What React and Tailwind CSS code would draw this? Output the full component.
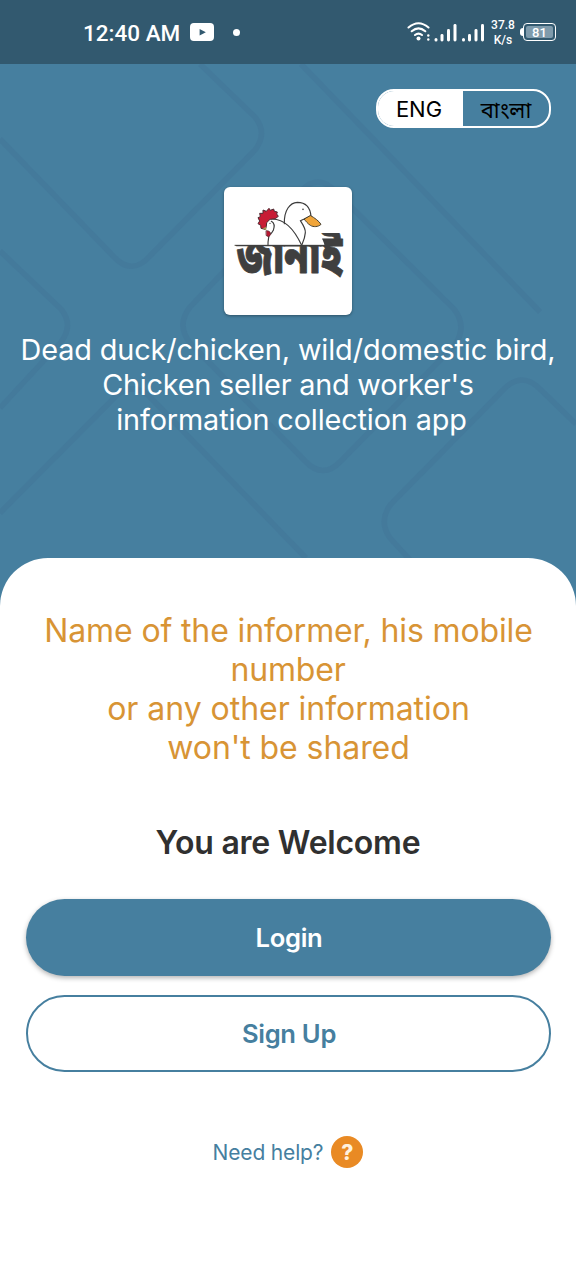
function BackgroundLines() {
  return (
    <svg
      className="absolute left-0 top-0"
      width="576"
      height="560"
      viewBox="0 64 576 560"
      fill="none"
      stroke="#43779a"
      strokeWidth="5.500"
      strokeOpacity="0.600"
      aria-hidden="true"
    >
      <path d="M200 64 L255 117 Q268 133 255 150 L150 256 Q132 276 114 257 L0 139" />
      <path d="M301 64 L540 312" />
      <path d="M0 251 L61 309 Q74 325 61 342 L0 408" />
      <path d="M300 192 Q318 172 336 192 L454 309 Q468 327 454 346 L341 461 Q323 480 305 461 L190 343 Q176 325 190 307 Z" />
      <path d="M0 513 L115 397 Q134 380 152 399 L306 558" />
      <path d="M412 562 L390 538 Q378 521 391 504 L503 390 Q522 370 541 390 L576 424" />
    </svg>
  );
}

function StatusBar() {
  return (
    <header className="flex h-16 shrink-0 items-center bg-[#32596f] pl-[83px] pr-5 text-white">
      <span className="w-[98px] whitespace-nowrap pt-[2px] font-[Roboto] text-[22.500px] font-medium leading-none">12:40 AM</span>
      <svg className="ml-[9px]" width="24" height="18" viewBox="0 0 25 18" preserveAspectRatio="none" aria-hidden="true">
        <rect width="25" height="18" rx="4" fill="#fff" />
        <path d="M10 6v6.500l6.500-3.200z" fill="#32596f" />
      </svg>
      <span className="ml-[19px] size-[7px] rounded-full bg-white" />
      <div className="ml-auto flex items-center">
        <svg width="78" height="24" viewBox="407 20 78 24" fill="none" aria-hidden="true">
          <g stroke="#fff" strokeWidth="2.100" strokeLinecap="round">
            <path d="M408.500 27.500q10-8.500 20 0" />
            <path d="M411.700 31.200q6.800-5.800 13.600 0" />
            <path d="M415 35q3.500-2.800 7 0" />
          </g>
          <circle cx="418.500" cy="38.500" r="2" fill="#fff" />
          <circle cx="428.300" cy="35.500" r="1.200" fill="#fff" />
          <circle cx="428.300" cy="39.500" r="1.200" fill="#fff" />
          <g fill="#fff">
            <rect x="434.500" y="38" width="3" height="3.500" rx="1.500" />
            <rect x="440.500" y="34" width="3" height="7.500" rx="1.400" />
            <rect x="447" y="29" width="3" height="12.500" rx="1.400" />
            <rect x="453.500" y="24" width="3" height="17.500" rx="1.400" />
            <rect x="462" y="38" width="3" height="3.500" rx="1.500" />
            <rect x="468" y="34" width="3" height="7.500" rx="1.400" />
            <rect x="474.500" y="29" width="3" height="12.500" rx="1.400" />
            <rect x="481" y="24" width="3" height="17.500" rx="1.400" />
          </g>
        </svg>
        <div className="ml-[6px] w-6 pt-px text-center font-[Roboto] text-[12px] font-medium leading-[15px]">
          <div>37.8</div>
          <div>K/s</div>
        </div>
        <div className="ml-[5px] flex items-center">
          <span className="h-2 w-[3px] rounded-l-sm bg-white" />
          <span className="flex h-[18px] w-[33px] rounded-[4px] border-[1.500px] border-white p-[2px]">
            <span className="flex w-full items-center justify-center rounded-[2px] bg-[#7f9bac] font-[Roboto] text-[13px] font-medium leading-none">81</span>
          </span>
        </div>
      </div>
    </header>
  );
}

function LanguageToggle() {
  return (
    <div className="flex h-[39px] w-[175px] overflow-hidden rounded-[18px] border-2 border-white text-[22px] text-black">
      <button className="flex w-[85px] items-center justify-center bg-white pr-[3px] pt-[2px]">ENG</button>
      <button className="flex flex-1 items-center justify-center pt-[7px] font-['Noto_Sans_Bengali','Noto_Sans',sans-serif]">বাংলা</button>
    </div>
  );
}

function Logo() {
  return (
    <div className="size-32 overflow-hidden rounded-md bg-white shadow-[0_1px_3px_rgba(0,0,0,0.35)]">
      <svg width="128" height="128" viewBox="30 27 384 384" fill="none" strokeLinecap="round" strokeLinejoin="round" role="img" aria-label="জানাই">
        <clipPath id="wordmark">
          <path d="M60 201H332L318 165H400V300H60Z" />
        </clipPath>
        <path d="M63 202H383" stroke="#444" strokeWidth="3" />
        <path d="M211 137C210 96 228 74 250 73C278 73 289 91 291 115L271 123L259 128C266 139 275 151 274 164C273 181 267 193 263 202" stroke="#3c3c3c" strokeWidth="3.500" />
        <path d="M162 202C161 191 164 181 165 172M172 130C181 135 182 146 178 157Q173 166 170 168M172 123C216 121 243 159 263 202" stroke="#3c3c3c" strokeWidth="3.500" />
        <path d="M290 113C301 119 315 129 321 139C313 147 298 148 289 142C281 137 276 130 271 124Z" fill="#f0a53a" stroke="#49412f" strokeWidth="3" />
        <path d="M153 154L141 151L140 142L132 137L137 129L132 119L139 116L137 106L147 106L147 96L157 100L165 91L169 97L179 93L181 100L190 102L188 108L193 115L184 122L168 124L158 134L157 145Z" fill="#c81c35" stroke="#4e2a32" strokeWidth="3" />
        <path d="M157 158Q170 157 170 170Q165 180 157 173Z" fill="#b71932" stroke="#4e2a32" strokeWidth="2" />
        <path d="M146 151L156 147L157 157Z" fill="#a59a54" />
        <circle cx="267" cy="94" r="2.500" fill="#3c3c3c" />
        <circle cx="168" cy="136" r="2" fill="#3c3c3c" />
        <g clipPath="url(#wordmark)">
          <text transform="matrix(1 0 0 1.300 0 -76)" x="68" y="277" fill="#3f3f3f" stroke="#3f3f3f" strokeWidth="2" fontSize="124" fontWeight="900" textLength="318" lengthAdjust="spacingAndGlyphs" fontFamily="'Noto Sans Bengali', 'Noto Sans', sans-serif">জানাই</text>
        </g>
      </svg>
    </div>
  );
}

export default function App() {
  return (
    <div className="flex h-[1280px] w-[576px] flex-col overflow-hidden bg-[#467f9f] font-[Inter,sans-serif]">
      <StatusBar />
      <main className="relative flex flex-1 flex-col">
        <BackgroundLines />
        <section className="relative flex h-[494px] shrink-0 flex-col items-center">
          <div className="mt-[25px] mr-[25px] self-end">
            <LanguageToggle />
          </div>
          <div className="mt-[59px]">
            <Logo />
          </div>
          <h1 className="mt-[17px] whitespace-nowrap text-center text-[28.800px] font-normal leading-[35.200px] text-white">
            <span className="block tracking-[-0.100px]">Dead duck/chicken, wild/domestic bird,</span>
            <span className="block tracking-[-0.210px]">Chicken seller and worker's</span>
            <span className="block pl-[7px] tracking-[-0.120px]">information collection app</span>
          </h1>
        </section>
        <section className="relative flex flex-1 flex-col items-center rounded-t-[48px] bg-white px-[25.500px]">
          <p className="mt-[53px] whitespace-nowrap text-center text-[32px] leading-[39px] text-[#d89435]">
            <span className="block pl-px tracking-[-0.130px]">Name of the informer, his mobile</span>
            <span className="block tracking-[-0.200px]">number</span>
            <span className="block pl-px tracking-[-0.040px]">or any other information</span>
            <span className="block pl-px tracking-[-0.080px]">won't be shared</span>
          </p>
          <h2 className="mt-[56px] text-[32px] font-semibold leading-[39px] tracking-[-0.240px] text-[#303030]">You are Welcome</h2>
          <button className="mt-[37px] h-[77px] w-full shrink-0 rounded-full bg-[#467f9f] pl-[2px] pt-[2px] text-[25.600px] font-semibold tracking-[-0.300px] text-white shadow-[0_2px_5px_rgba(0,0,0,0.3)]">Login</button>
          <button className="mt-[19px] h-[77px] w-full shrink-0 rounded-full border-2 border-[#467f9f] pl-[2px] pt-[2px] text-[25.600px] font-semibold tracking-[-0.300px] text-[#467f9f]">Sign Up</button>
          <a className="mt-16 flex items-center gap-2 text-[21px] leading-none text-[#467f9f]">
            <span className="tracking-[-0.160px]">Need help?</span>
            <span className="flex size-8 items-center justify-center rounded-full bg-[#e98a24] text-[21px] font-extrabold text-[#fff1de]">?</span>
          </a>
        </section>
      </main>
    </div>
  );
}
